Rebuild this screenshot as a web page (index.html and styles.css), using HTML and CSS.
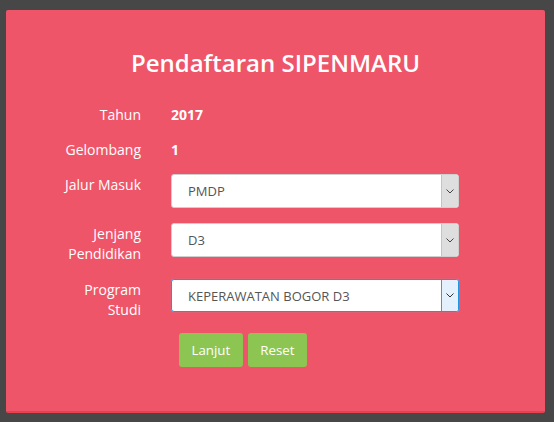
FILE: index.html
```html
<!DOCTYPE html>
<html lang="id">
<head>
<meta charset="utf-8">
<title>Pendaftaran SIPENMARU</title>
<link rel="stylesheet" href="styles.css">
</head>
<body>
<div class="panel">
  <h2 class="title">Pendaftaran SIPENMARU</h2>
  <form class="form">
    <div class="row static first">
      <label class="label">Tahun</label>
      <div class="value">2017</div>
    </div>
    <div class="row static second">
      <label class="label">Gelombang</label>
      <div class="value">1</div>
    </div>
    <div class="row field r1">
      <label class="label">Jalur Masuk</label>
      <div class="select">
        <select><option>PMDP</option></select>
        <span class="arrow"><svg width="8" height="5" viewBox="0 0 8 5"><path d="M0.5 0.5 L4 4 L7.5 0.5" fill="none" stroke="#444" stroke-width="1"/></svg></span>
      </div>
    </div>
    <div class="row field r2">
      <label class="label">Jenjang<br>Pendidikan</label>
      <div class="select">
        <select><option>D3</option></select>
        <span class="arrow"><svg width="8" height="5" viewBox="0 0 8 5"><path d="M0.5 0.5 L4 4 L7.5 0.5" fill="none" stroke="#444" stroke-width="1"/></svg></span>
      </div>
    </div>
    <div class="row field r3">
      <label class="label">Program<br>Studi</label>
      <div class="select focus">
        <select><option>KEPERAWATAN BOGOR D3</option></select>
        <span class="arrow"><svg width="8" height="5" viewBox="0 0 8 5"><path d="M0.5 0.5 L4 4 L7.5 0.5" fill="none" stroke="#333" stroke-width="1"/></svg></span>
      </div>
    </div>
    <div class="row actions">
      <div></div>
      <div class="buttons">
        <button type="button" class="btn">Lanjut</button>
        <button type="reset" class="btn">Reset</button>
      </div>
    </div>
  </form>
</div>
</body>
</html>
```
FILE: styles.css
```css
html, body {
  margin: 0;
  padding: 0;
}
body {
  background: #474747;
  font-family: "Open Sans", "Noto Sans", sans-serif;
  width: 554px;
  height: 422px;
  overflow: hidden;
}
.panel {
  box-sizing: border-box;
  margin: 10px 0 0 6px;
  width: 539px;
  height: 403px;
  background: #ef5568;
  border-bottom: 2px solid #e9404f;
  border-radius: 2px;
  padding-top: 40px;
}
.title {
  margin: 0;
  font-size: 24px;
  font-weight: 600;
  line-height: 26px;
  color: #fff;
  text-align: center;
}
.form {
  margin-top: 29px;
  display: flex;
  flex-direction: column;
}
.row {
  display: grid;
  grid-template-columns: 135px 288px;
  column-gap: 30px;
}
.label {
  color: #fff;
  font-size: 14px;
  font-weight: 500;
  line-height: 20px;
  text-align: right;
}
.static {
  height: 20px;
  margin-bottom: 14.5px;
}
.value {
  color: #fff;
  font-size: 14px;
  line-height: 20px;
  font-weight: 700;
}
.field .label {
  padding-top: 1px;
}
.r1 { height: 34px; margin-bottom: 15px; }
.r2 { height: 41px; margin-bottom: 15px; }
.r3 { height: 41px; }
.select {
  box-sizing: border-box;
  height: 34px;
  display: flex;
  border: 1px solid #cfcfcf;
  border-radius: 3px;
  background: #fff;
  overflow: hidden;
}
.r3 .select { height: 33px; }
.select select {
  flex: 1;
  -webkit-appearance: none;
  appearance: none;
  border: 0;
  outline: 0;
  background: transparent;
  padding: 0 0 0 16px;
  margin: 0;
  font-family: "Open Sans", "Noto Sans", sans-serif;
  font-size: 13px;
  color: #555;
}
.arrow {
  width: 16px;
  border-left: 1px solid #c4c4c4;
  background: #dedede;
  display: flex;
  align-items: center;
  justify-content: center;
}
.select.focus {
  border-color: #1f95e6;
  box-shadow: 0 0 1px #66b6ee;
}
.select.focus .arrow {
  background: #e4f0fb;
  border-left-color: #3a9be4;
}
.actions {
  margin-top: 13px;
}
.buttons {
  display: flex;
  gap: 5px;
  padding-left: 8px;
}
.btn {
  height: 34px;
  padding: 0 12.5px;
  border: 0;
  border-radius: 3px;
  background: #8dc553;
  color: #fff;
  font-family: "Open Sans", "Noto Sans", sans-serif;
  font-size: 13.3px;
}
```
